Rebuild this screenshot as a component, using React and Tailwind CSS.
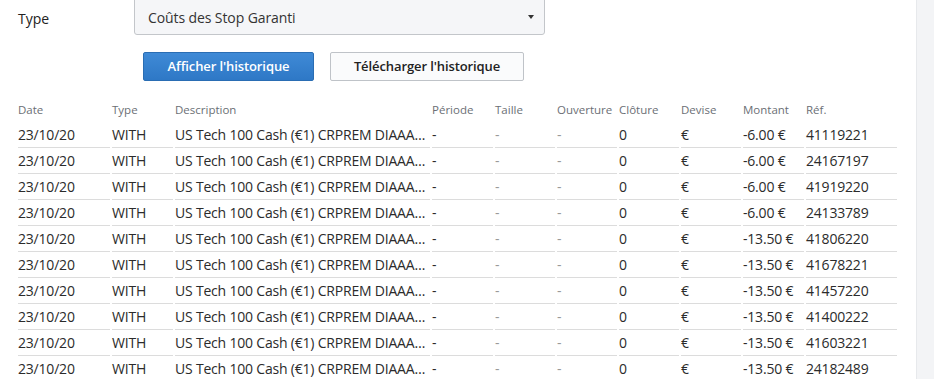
import React from "react";

const rows = [
  ["-6.00 €", "41119221"],
  ["-6.00 €", "24167197"],
  ["-6.00 €", "41919220"],
  ["-6.00 €", "24133789"],
  ["-13.50 €", "41806220"],
  ["-13.50 €", "41678221"],
  ["-13.50 €", "41457220"],
  ["-13.50 €", "41400222"],
  ["-13.50 €", "41603221"],
  ["-13.50 €", "24182489"],
];

const grid =
  "grid grid-cols-[92px_61px_255px_61px_60px_60px_60px_60px_61px_91px] gap-x-[2px]";

export default function App() {
  return (
    <div
      className="w-[934px] h-[379px] overflow-hidden flex bg-white text-[#333]"
      style={{ fontFamily: '"Open Sans", "Noto Sans", sans-serif' }}
    >
      <div className="w-[916px] pl-[18px] flex flex-col">
        <div className="flex h-[36px] items-start">
          <div className="w-[116px] h-[36px] flex items-center text-[14px] text-[#222]">Type</div>
          <div className="w-[411px] h-[36px] -mt-[1px] border border-[#c3c6ca] rounded-b-[3px] bg-[#f5f6f8] flex items-center justify-between pl-[13px] pr-[10px]">
            <span className="text-[14px] text-[#333] tracking-[-0.1px]">Coûts des Stop Garanti</span>
            <span className="w-0 h-0 border-l-[3.5px] border-r-[3.5px] border-t-[4px] border-l-transparent border-r-transparent border-t-[#333]"></span>
          </div>
        </div>
        <div className="flex mt-[16px] ml-[125px] gap-[16px]">
          <button className="w-[171px] h-[29px] rounded-[2px] bg-gradient-to-b from-[#3f8ad6] to-[#2e78c6] border border-[#2a6db3] text-white text-[13px] font-semibold tracking-[-0.1px]">
            Afficher l'historique
          </button>
          <button className="w-[194px] h-[29px] rounded-[2px] bg-[#fafbfc] border border-[#bfc3c8] text-[#222] text-[13px] font-semibold tracking-[-0.1px]">
            Télécharger l'historique
          </button>
        </div>
        <div className="mt-[17px]">
          <div className={`${grid} h-[24px] items-center text-[11.5px] text-[#6b6f75]`}>
            <div>Date</div>
            <div>Type</div>
            <div>Description</div>
            <div>Période</div>
            <div>Taille</div>
            <div>Ouverture</div>
            <div>Clôture</div>
            <div>Devise</div>
            <div>Montant</div>
            <div>Réf.</div>
          </div>
          {rows.map((r, i) => (
            <div key={i} className={`${grid} h-[26px] text-[14px] text-[#2b2b2b] tracking-[-0.2px]`}>
              <div className="border-b border-[#dcdcdc] flex items-center">23/10/20</div>
              <div className="border-b border-[#dcdcdc] flex items-center">WITH</div>
              <div className="border-b border-[#dcdcdc] flex items-center whitespace-nowrap">US Tech 100 Cash (€1) CRPREM DIAAA…</div>
              <div className="border-b border-[#dcdcdc] flex items-center">-</div>
              <div className="border-b border-[#dcdcdc] flex items-center text-[#999]">-</div>
              <div className="border-b border-[#dcdcdc] flex items-center text-[#999]">-</div>
              <div className="border-b border-[#dcdcdc] flex items-center">0</div>
              <div className="border-b border-[#dcdcdc] flex items-center">€</div>
              <div className="border-b border-[#dcdcdc] flex items-center whitespace-nowrap">{r[0]}</div>
              <div className="border-b border-[#dcdcdc] flex items-center">{r[1]}</div>
            </div>
          ))}
        </div>
      </div>
      <div className="flex-1 bg-[#f3f4f6] border-l border-[#e7e9ec]"></div>
    </div>
  );
}
